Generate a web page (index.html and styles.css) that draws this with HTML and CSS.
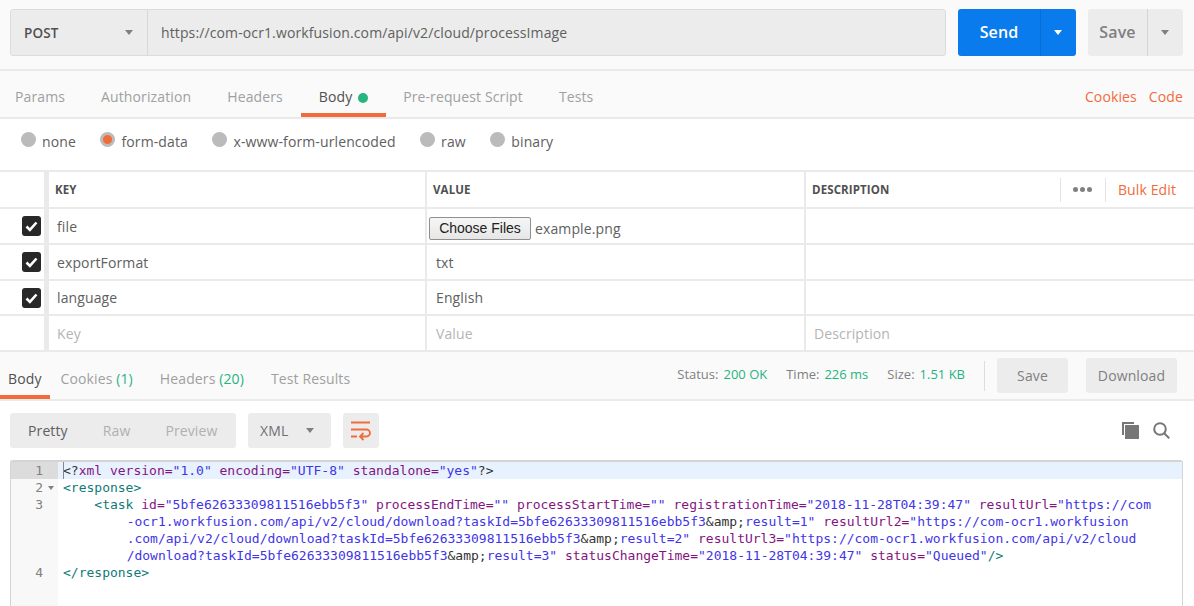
FILE: index.html
```html
<!DOCTYPE html>
<html>

<head>
<title>Postman request</title>
<link rel="stylesheet" href="styles.css">
</head>

<body>

<div class="url-bar">
  <div class="url-box">
    <div class="method">POST <span class="caret"></span></div>
    <div class="url">https://com-ocr1.workfusion.com/api/v2/cloud/processImage</div>
  </div>
  <div class="split send">
    <div class="split-main">Send</div>
    <div class="split-side"><span class="caret caret-white"></span></div>
  </div>
  <div class="split save">
    <div class="split-main">Save</div>
    <div class="split-side"><span class="caret"></span></div>
  </div>
</div>

<div class="tabs req-tabs">
  <span class="tab">Params</span>
  <span class="tab">Authorization</span>
  <span class="tab">Headers</span>
  <span class="tab tab-on">Body <i class="dot"></i></span>
  <span class="tab">Pre-request Script</span>
  <span class="tab">Tests</span>
  <span class="tab-links"><a>Cookies</a><a>Code</a></span>
</div>

<div class="body-types">
  <label><i class="radio"></i>none</label>
  <label><i class="radio radio-on"></i>form-data</label>
  <label><i class="radio"></i>x-www-form-urlencoded</label>
  <label><i class="radio"></i>raw</label>
  <label><i class="radio"></i>binary</label>
</div>

<div class="params">
  <div class="row row-head">
    <div class="cell"></div>
    <div class="cell">KEY</div>
    <div class="cell">VALUE</div>
    <div class="cell head-desc">
      <span>DESCRIPTION</span>
      <span class="head-tools"><span class="more"><i></i><i></i><i></i></span><a>Bulk Edit</a></span>
    </div>
  </div>
  <div class="row">
    <div class="cell cell-check"><svg class="check" viewBox="0 0 19 20"><rect width="19" height="20" rx="3" fill="#282828"/><path d="M4.5 10.5l3.4 3.4 6.6-7.4" fill="none" stroke="#fff" stroke-width="2.6"/></svg></div>
    <div class="cell">file</div>
    <div class="cell cell-file"><button class="file-btn">Choose Files</button>example.png</div>
    <div class="cell"></div>
  </div>
  <div class="row">
    <div class="cell cell-check"><svg class="check" viewBox="0 0 19 20"><rect width="19" height="20" rx="3" fill="#282828"/><path d="M4.5 10.5l3.4 3.4 6.6-7.4" fill="none" stroke="#fff" stroke-width="2.6"/></svg></div>
    <div class="cell">exportFormat</div>
    <div class="cell">txt</div>
    <div class="cell"></div>
  </div>
  <div class="row row-short">
    <div class="cell cell-check"><svg class="check" viewBox="0 0 19 20"><rect width="19" height="20" rx="3" fill="#282828"/><path d="M4.5 10.5l3.4 3.4 6.6-7.4" fill="none" stroke="#fff" stroke-width="2.6"/></svg></div>
    <div class="cell">language</div>
    <div class="cell">English</div>
    <div class="cell"></div>
  </div>
  <div class="row row-empty">
    <div class="cell"></div>
    <div class="cell">Key</div>
    <div class="cell">Value</div>
    <div class="cell">Description</div>
  </div>
</div>

<div class="tabs res-tabs">
  <span class="tab tab-on">Body</span>
  <span class="tab">Cookies <b>(1)</b></span>
  <span class="tab">Headers <b>(20)</b></span>
  <span class="tab">Test Results</span>
  <div class="res-meta">
    <span class="stat">Status:<b>200 OK</b></span>
    <span class="stat">Time:<b>226 ms</b></span>
    <span class="stat">Size:<b>1.51 KB</b></span>
    <span class="meta-sep"></span>
    <span class="btn btn-save">Save</span>
    <span class="btn btn-download">Download</span>
  </div>
</div>

<div class="toolbar">
  <div class="btn-group">
    <span class="view view-on">Pretty</span>
    <span class="view">Raw</span>
    <span class="view">Preview</span>
  </div>
  <div class="format">XML <span class="caret"></span></div>
  <div class="wrap-btn">
    <svg width="20" height="20" viewBox="0 0 20 20" fill="none" stroke="#f26b3a" stroke-width="1.8"><path d="M0 1.5h19M0 8.5h15.5a3.5 3.5 0 0 1 0 7H9M12.5 12l-3.5 3.5 3.5 3.5M0 15.5h6"/></svg>
  </div>
  <div class="tool-icons">
    <svg width="17" height="17" viewBox="0 0 17 17" fill="#777"><path d="M0 0h12v2H2v11H0z"/><path d="M3 3h14v14H3z"/></svg>
    <svg width="17" height="17" viewBox="0 0 17 17" fill="none" stroke="#777" stroke-width="2"><circle cx="7" cy="7" r="5.8"/><path d="M11.2 11.2l5 5"/></svg>
  </div>
</div>

<div class="editor">
  <div class="gutter">
    <div class="ln ln-on">1</div>
    <div class="ln ln-fold">2<span class="fold"></span></div>
    <div class="ln">3</div>
    <div class="ln"></div>
    <div class="ln"></div>
    <div class="ln"></div>
    <div class="ln">4</div>
  </div>
<pre class="code"><div class="line-on"><span class="cursor"></span><span class="x">&lt;?</span><span class="a">xml version=</span><span class="s">"1.0"</span> <span class="a">encoding=</span><span class="s">"UTF-8"</span> <span class="a">standalone=</span><span class="s">"yes"</span><span class="x">?&gt;</span></div><span class="t">&lt;response&gt;</span>
    <span class="t">&lt;task</span> <span class="a">id=</span><span class="s">"5bfe62633309811516ebb5f3"</span> <span class="a">processEndTime=</span><span class="s">""</span> <span class="a">processStartTime=</span><span class="s">""</span> <span class="a">registrationTime=</span><span class="s">"2018-11-28T04:39:47"</span> <span class="a">resultUrl=</span><span class="s">"https://com</span>
        <span class="s cont">-ocr1.workfusion.com/api/v2/cloud/download?taskId=5bfe62633309811516ebb5f3</span><span class="x">&amp;amp;</span><span class="s">result=1"</span> <span class="a">resultUrl2=</span><span class="s">"https://com-ocr1.workfusion</span>
        <span class="s cont">.com/api/v2/cloud/download?taskId=5bfe62633309811516ebb5f3</span><span class="x">&amp;amp;</span><span class="s">result=2"</span> <span class="a">resultUrl3=</span><span class="s">"https://com-ocr1.workfusion.com/api/v2/cloud</span>
        <span class="s cont">/download?taskId=5bfe62633309811516ebb5f3</span><span class="x">&amp;amp;</span><span class="s">result=3"</span> <span class="a">statusChangeTime=</span><span class="s">"2018-11-28T04:39:47"</span> <span class="a">status=</span><span class="s">"Queued"</span><span class="t">/&gt;</span>
<span class="t">&lt;/response&gt;</span></pre>
</div>

</body>

</html>
```

FILE: styles.css
```css
body {
   margin: 0;
   height: 606px;
   overflow: hidden;
   background: #fff;
   color: #505050;
   font-family: "Open Sans", sans-serif;
   font-size: 14px;
   letter-spacing: 0.12px; }

a {
   color: #f26b3a; }

.caret {
   display: inline-block;
   width: 0;
   height: 0;
   border-left: 4.5px solid transparent;
   border-right: 4.5px solid transparent;
   border-top: 5px solid #808080; }

.caret-white {
   border-top-color: #fff; }

/* url bar */

.url-bar {
   display: flex;
   align-items: flex-start;
   height: 71px;
   padding: 9px 11px 0 10px;
   box-sizing: border-box;
   background: #fafafa;
   border-bottom: 2px solid #eaeaea; }

.url-box {
   display: flex;
   width: 936px;
   height: 47px;
   box-sizing: border-box;
   background: #ececec;
   border: 1px solid #dcdcdc;
   border-radius: 3px;
   margin-right: 12px; }

.method {
   display: flex;
   align-items: center;
   justify-content: space-between;
   width: 137px;
   padding: 0 14px 0 13px;
   box-sizing: border-box;
   border-right: 1px solid #d8d8d8;
   font-weight: 600;
   font-size: 13.5px;
   color: #505050; }

.url {
   padding-left: 13px;
   line-height: 45px;
   color: #606060; }

.split {
   display: flex;
   height: 47px;
   border-radius: 3px;
   font-size: 16px;
   font-weight: 600;
   line-height: 47px; }

.split-main {
   text-align: center; }

.split-side {
   display: flex;
   align-items: center;
   justify-content: center;
   padding-right: 2px;
   box-sizing: border-box;
   border-left: 1px solid rgba(0, 0, 0, 0.1); }

.send {
   width: 118px;
   margin-right: 12px;
   background: #097bed;
   color: #fff; }

.send .split-main {
   width: 82px; }

.send .split-side {
   width: 36px; }

.save {
   width: 95px;
   background: #ececec;
   color: #808080; }

.save .split-main {
   width: 59px; }

.save .split-side {
   width: 36px; }

/* tabs */

.tabs {
   display: flex;
   box-sizing: border-box;
   background: #fafafa;
   border-bottom: 2px solid #eaeaea; }

.tab {
   display: flex;
   align-items: center;
   box-sizing: border-box;
   color: #a0a0a0;
   white-space: pre; }

.tab-on {
   color: #505050;
   border-bottom: 4px solid #f26b3a; }

.req-tabs {
   height: 48px;
   padding-left: 15px; }

.req-tabs .tab {
   margin-right: 36px;
   padding: 5px 0 0 0; }

.req-tabs .tab-on {
   margin-left: -18px;
   margin-right: 17px;
   padding: 9px 18px 0 18px; }

.dot {
   display: inline-block;
   width: 10px;
   height: 10px;
   margin-left: 2px;
   margin-top: 3px;
   border-radius: 50%;
   background: #26b47f; }

.tab-links {
   display: flex;
   align-items: center;
   margin-left: auto;
   padding: 5px 11px 0 0; }

.tab-links a {
   margin-left: 12px; }

.body-types {
   display: flex;
   height: 51px;
   box-sizing: border-box;
   align-items: center;
   padding: 0 0 6px 21px;
   color: #606060; }

.body-types label {
   display: flex;
   align-items: center;
   margin-right: 24.5px; }

.radio {
   display: inline-block;
   width: 15px;
   height: 15px;
   margin-right: 6px;
   margin-top: -4px;
   border-radius: 50%;
   background: #bbb; }

.radio-on {
   background: radial-gradient(circle, #f26b3a 0, #f26b3a 4px, #bbb 5px); }

/* params table */

.params {
   border-top: 2px solid #eaeaea; }

.row {
   display: grid;
   grid-template-columns: 49px 378px 379px 1fr;
   height: 36px;
   border-bottom: 2px solid #eaeaea;
   box-sizing: border-box; }

.row-short {
   height: 35px; }

.row-head {
   height: 37px;
   font-size: 11.5px;
   font-weight: 700; }

.cell {
   display: flex;
   align-items: center;
   padding-left: 8px;
   box-sizing: border-box;
   border-right: 2px solid #eaeaea;
   color: #606060; }

.cell:first-child {
   border-right-width: 5px; }

.cell:nth-child(3) {
   padding-left: 9px; }

.cell:last-child {
   border-right: 0; }

.row-head .cell {
   padding-left: 6px;
   color: #505050; }

.row-head .head-desc {
   justify-content: space-between;
   padding-left: 6px;
   padding-right: 18px; }

.head-tools {
   display: flex;
   align-items: center;
   height: 24px; }

.more {
   display: flex;
   align-items: center;
   justify-content: center;
   gap: 2px;
   width: 44px;
   height: 24px;
   border-left: 1px solid #e4e4e4;
   border-right: 1px solid #e4e4e4;
   margin-right: 12px; }

.more i {
   width: 5px;
   height: 5px;
   border-radius: 50%;
   background: #808080; }

.head-tools a {
   font-size: 14px;
   font-weight: 400; }

.row .cell-check {
   padding: 0 0 0 22px; }

.check {
   width: 19px;
   height: 20px; }

.row .cell-file {
   padding: 4px 0 0 2px; }

.file-btn {
   width: 102px;
   height: 23px;
   margin-right: 4px;
   padding: 0;
   background: linear-gradient(#f6f6f6, #e6e6e6);
   border: 1px solid #8f8f8f;
   border-radius: 2px;
   color: #222;
   font-family: "Liberation Sans", sans-serif;
   font-size: 14px; }

.row-empty .cell {
   color: #b4b4b4; }

/* response */

.res-tabs {
   height: 49px; }

.res-tabs .tab {
   margin-right: 27px;
   padding-top: 6px; }

.res-tabs .tab-on {
   padding: 10px 8px 0 8px;
   margin-right: 11px; }

.res-tabs b {
   font-weight: 400;
   color: #26b47f; }

.res-meta {
   display: flex;
   align-items: flex-start;
   margin-left: auto;
   padding: 6px 17px 0 0; }

.stat {
   margin-right: 19px;
   color: #808080;
   font-size: 13px;
   line-height: 33px;
   letter-spacing: 0; }

.stat b {
   margin-left: 5px;
   font-weight: 400;
   color: #26b47f; }

.meta-sep {
   width: 1px;
   height: 30px;
   margin: 3px 12px 0 0;
   background: #ddd; }

.btn {
   display: block;
   height: 35px;
   line-height: 35px;
   text-align: center;
   border-radius: 3px;
   background: #ececec;
   color: #808080; }

.btn-save {
   width: 71px;
   margin-right: 18px; }

.btn-download {
   width: 91px; }

/* toolbar */

.toolbar {
   display: flex;
   align-items: flex-start;
   height: 59px;
   padding: 12px 24px 0 10px;
   box-sizing: border-box; }

.btn-group, .format, .wrap-btn {
   display: flex;
   align-items: center;
   height: 35px;
   box-sizing: border-box;
   border-radius: 3px;
   background: #ececec; }

.btn-group {
   width: 226px;
   gap: 35px;
   padding-left: 18px;
   margin-right: 12px; }

.view {
   color: #b0b0b0; }

.view-on {
   color: #606060; }

.format {
   justify-content: space-between;
   width: 83px;
   padding: 0 17px 0 12px;
   margin-right: 12px;
   color: #707070; }

.wrap-btn {
   justify-content: center;
   width: 36px; }

.tool-icons {
   display: flex;
   gap: 14px;
   margin: 9px 0 0 auto; }

/* code */

.editor {
   display: flex;
   height: 146px;
   margin: 0 11px 0 10px;
   box-sizing: border-box;
   border: 1px solid #d4d4d4;
   border-width: 2px 1px 0 1px;
   border-radius: 3px 3px 0 0; }

.gutter {
   flex: none;
   width: 47px;
   background: #f8f8f8;
   color: #808080;
   font-family: "DejaVu Sans Mono", monospace;
   font-size: 13px;
   line-height: 17px;
   letter-spacing: 0; }

.ln {
   position: relative;
   height: 17px;
   padding-right: 15px;
   text-align: right; }

.ln-on {
   background: #dcdcdc; }

.fold {
   position: absolute;
   right: 4px;
   top: 7px;
   border-left: 3px solid transparent;
   border-right: 3px solid transparent;
   border-top: 4px solid #808080; }

.code {
   flex: 1;
   margin: 0;
   padding-left: 5px;
   color: #333;
   font-family: "DejaVu Sans Mono", monospace;
   font-size: 13px;
   line-height: 17px;
   letter-spacing: 0; }

.line-on {
   position: relative;
   height: 17px;
   margin-left: -5px;
   padding-left: 5px;
   background: #e8f2ff; }

.cursor {
   position: absolute;
   left: 5px;
   top: 0;
   width: 1px;
   height: 17px;
   background: #888; }

.x {
   color: #333; }

.t {
   color: #117a78; }

.a {
   color: #84157f; }

.s {
   color: #3f35e6; }

.cont {
   margin-left: 1px; }
```
